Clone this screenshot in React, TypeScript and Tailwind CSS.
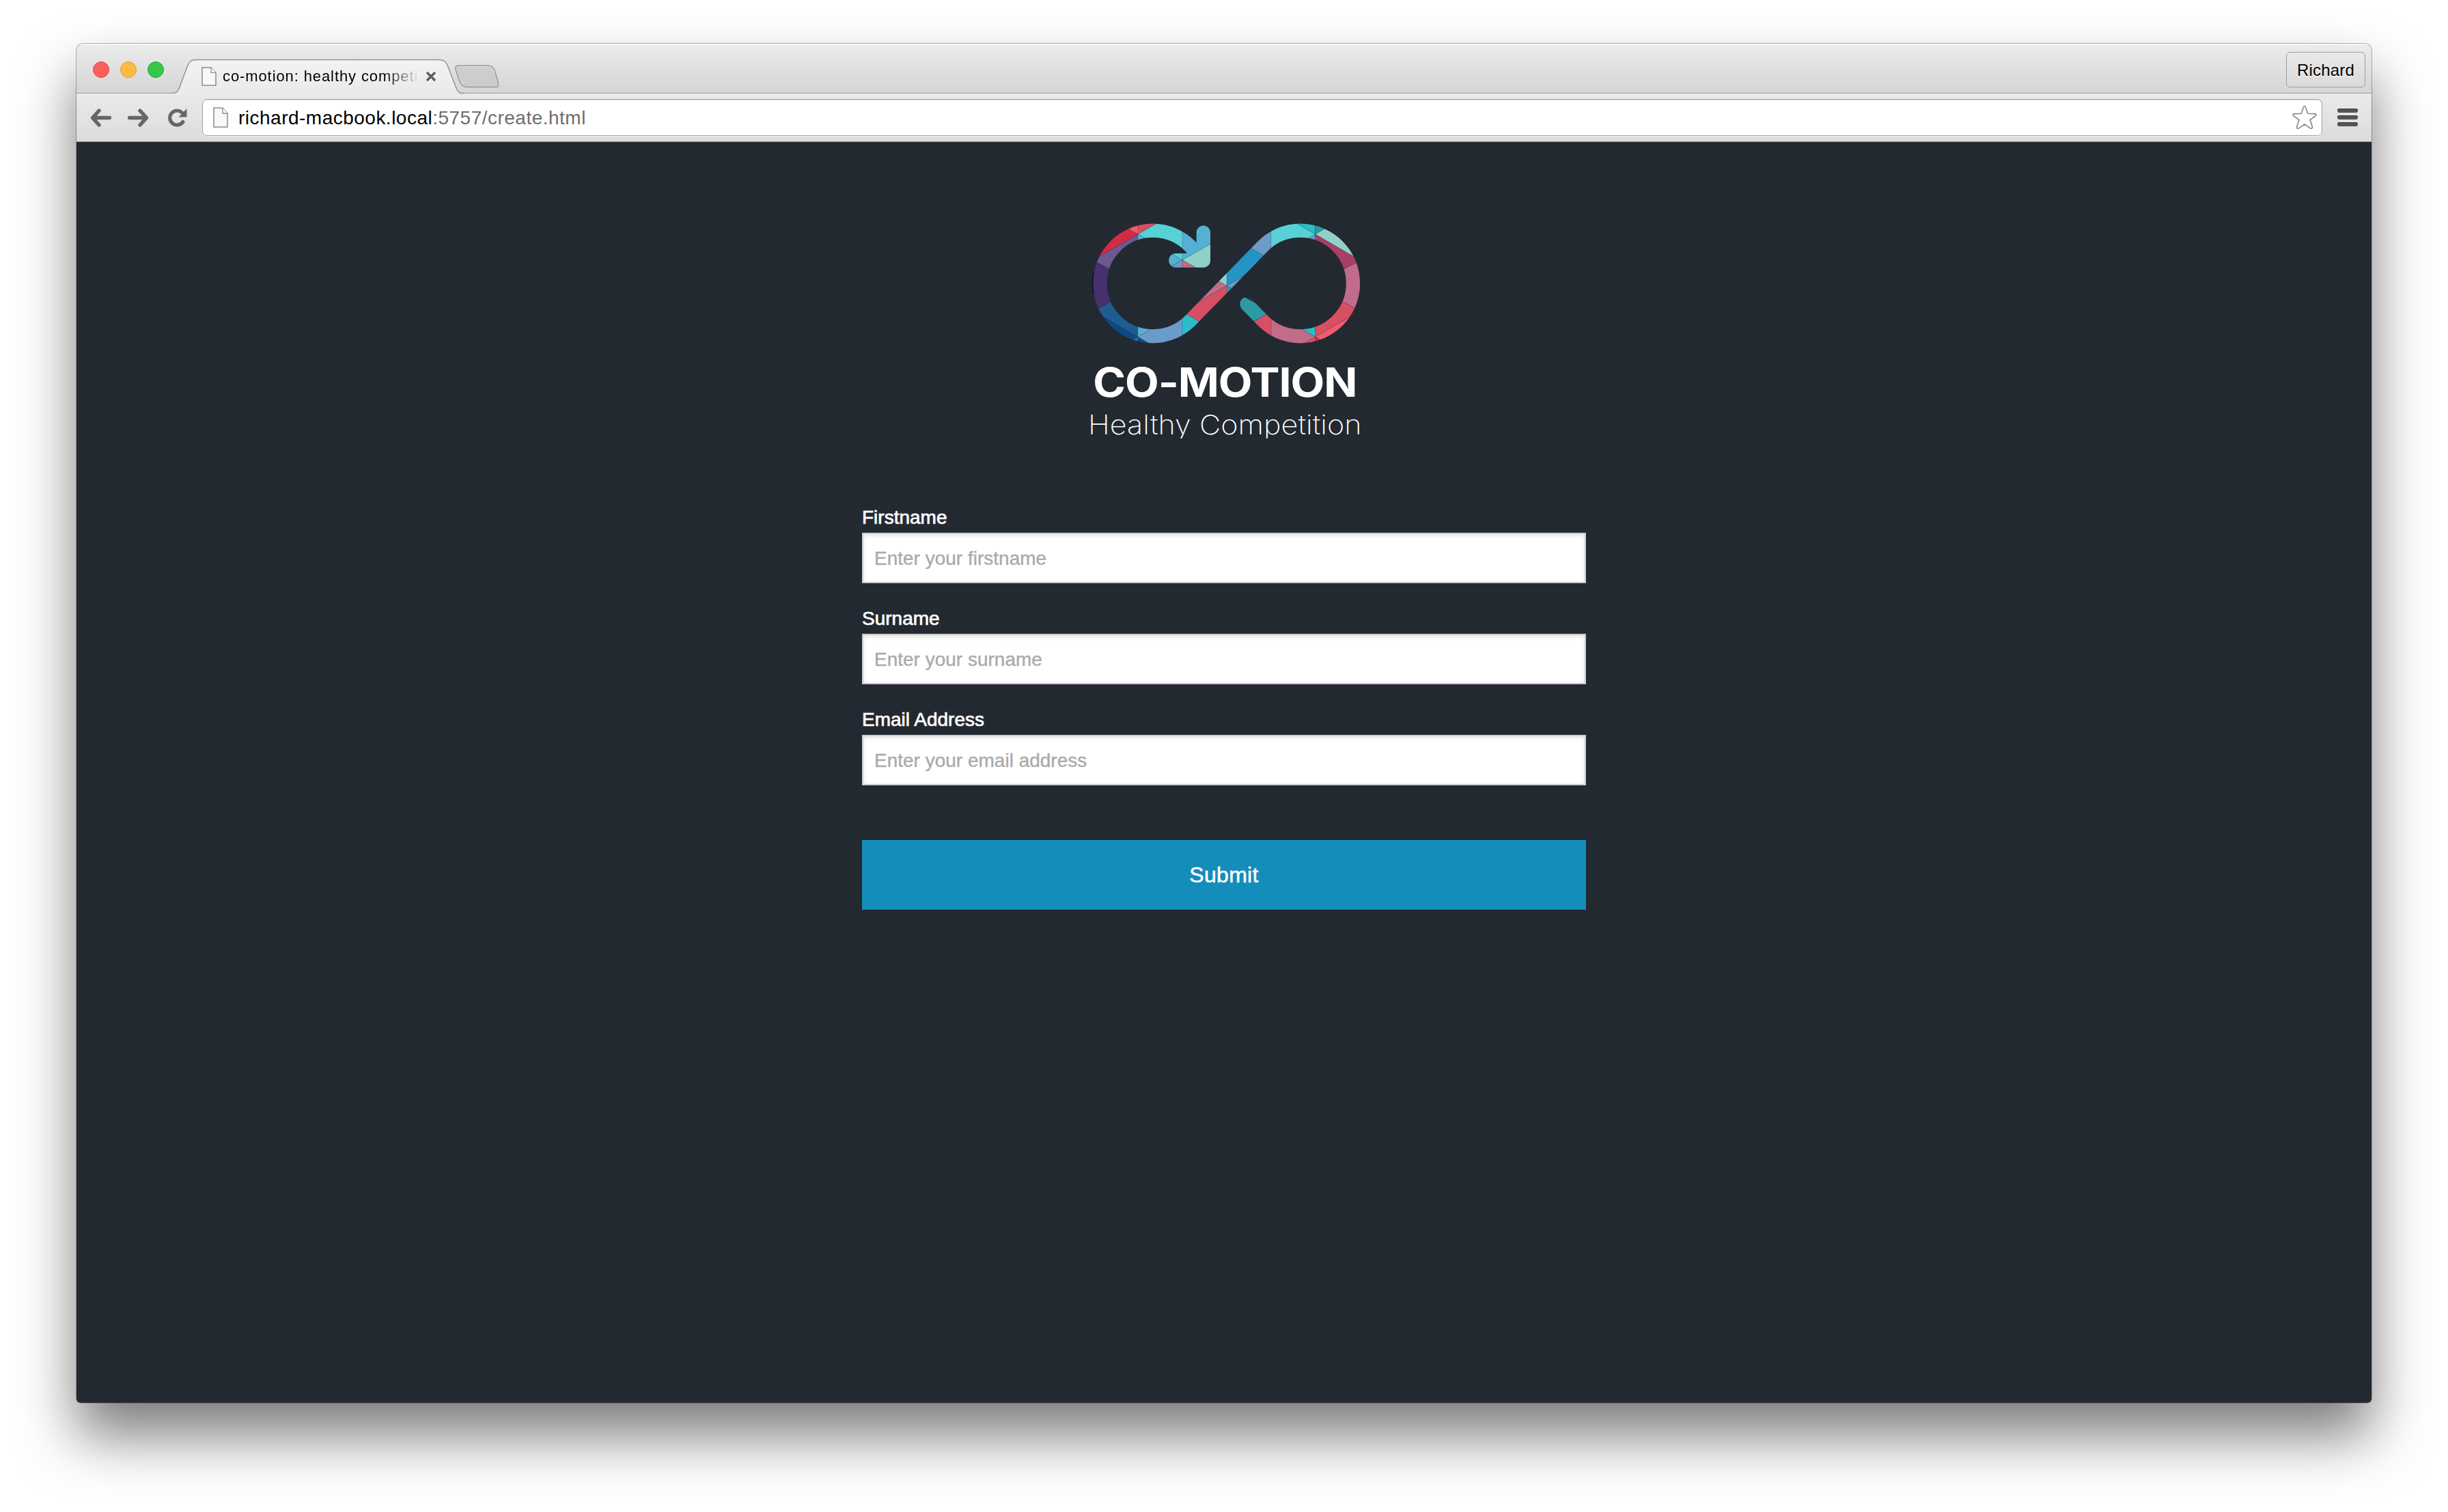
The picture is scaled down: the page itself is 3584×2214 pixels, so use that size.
import React from "react";

const LOGO_FACETS: [string, string][] = [
  // left loop
  ["#47306f", "20,188 160,266 160,383 20,464"],
  ["#6c5a8f", "70,207 258,99 258,180 160,266 70,217"],
  ["#d42b45", "70,207 258,99 190,60 150,30 40,40"],
  ["#f25a70", "258,99 190,60 190,30 258,30"],
  ["#d64f63", "258,99 258,30 378,30"],
  ["#58d1d6", "258,99 378,30 453,30 453,180 340,146"],
  ["#55b1d4", "258,99 320,134 300,160 258,160"],
  ["#205c92", "60,441 160,383 258,470 258,550 60,436"],
  ["#0d4a85", "60,436 258,550 220,572 60,580"],
  ["#2d72b5", "258,550 258,600 220,572"],
  ["#0d4a85", "258,550 258,600 345,600"],
  ["#55b1d4", "258,550 258,480 345,500"],
  ["#6b9bc8", "258,550 345,500 453,440 453,600 345,600"],
  // diagonal
  ["#2bbcc8", "453,439 453,600 545,492"],
  ["#d64f63", "450,437 545,492 648,400 648,325 450,439"],
  ["#c06c8a", "648,325 500,410 560,275"],
  ["#8fd1c8", "648,325 560,275 648,220"],
  ["#2494c5", "648,325 648,220 735,149 830,204 790,243"],
  ["#6b9bc8", "648,325 760,261 700,355"],
  ["#2b9aa2", "648,325 700,355 648,400"],
  ["#6b9bc8", "735,149 830,204 843,204 843,60"],
  // right loop
  ["#58d1d6", "843,60 920,30 1037,99 960,144 843,200"],
  ["#6b9bc8", "1037,99 1037,150 980,132"],
  ["#2bbcc8", "1037,99 920,30 1037,30"],
  ["#2b9aa2", "1037,99 1037,30 1130,45"],
  ["#8fd1c8", "1037,99 1130,45 1240,120 1240,217"],
  ["#a83f66", "1037,99 1240,217 1240,213 1140,264 1037,200"],
  ["#c06c8a", "1140,264 1240,213 1260,300 1240,439 1130,381"],
  ["#d64f63", "1130,381 1240,439 1240,432 1037,550 1037,460"],
  ["#f25a70", "1037,550 1240,432 1200,600 1100,586"],
  ["#d42b45", "1037,550 1100,586 1037,600"],
  ["#d64f63", "1037,550 1037,600 950,600"],
  ["#2bbcc8", "1037,550 1037,480 950,500"],
  ["#c06c8a", "1037,550 950,500 843,440 843,600 950,600"],
  ["#d64f63", "750,491 843,438 843,600"],
  ["#2b9aa2", "680,350 843,438 750,491 680,440"],
  ["#6b9bc8", "736,370 770,370 770,393"],
  // arrow head
  ["#55b1d4", "453,60 453,212 600,129 600,30"],
  ["#8fd1c8", "453,212 600,129 600,270 550,268"],
  ["#c06c8a", "453,212 550,268 453,270"],
  ["#58d1d6", "453,212 453,183 403,183"],
  ["#55b1d4", "453,212 395,178 380,212 395,245"],
  ["#6b9bc8", "453,212 395,245 453,260"],
];

function Logo() {
  return (
    <svg viewBox="0 0 1290 996" className="ml-[6px] h-[332px] w-[430px]" role="img" aria-label="CO-MOTION Healthy Competition">
      <defs>
        <mask id="loop" maskUnits="userSpaceOnUse" x="0" y="0" width="1290" height="630">
          <path
            d="M528 193 L487 151 A232 232 0 1 0 487 479 L807 151 A232 232 0 1 1 807 479 L736 406"
            fill="none"
            stroke="#fff"
            strokeWidth="61"
          />
          <circle cx="736" cy="405.500" r="30.500" fill="#fff" />
          <path
            d="M515 91 A30.500 30.500 0 0 1 576 91 V215 A30 30 0 0 1 546 245 H424 A31 31 0 0 1 424 183 H470 L515 138 Z"
            fill="#fff"
          />
        </mask>
      </defs>
      <path d="M63 268 Q57 315 63 360 Z" fill="#000" stroke="#000" strokeWidth="4" />
      <g mask="url(#loop)" stroke="#16303c" strokeOpacity="0.35" strokeWidth="1.5">
        {LOGO_FACETS.map(([fill, points], i) => (
          <polygon key={i} fill={fill} points={points} />
        ))}
      </g>
      <text x="61" y="812" textLength="1158" lengthAdjust="spacingAndGlyphs" className="fill-white font-['Inter'] text-[177px] font-bold tracking-[-3px]">
        CO-MOTION
      </text>
      <text x="39" y="978" textLength="1202" lengthAdjust="spacingAndGlyphs" className="fill-white font-['Inter'] text-[117px] font-extralight">
        Healthy Competition
      </text>
    </svg>
  );
}

function PageIcon({ className }: { className: string }) {
  return (
    <svg viewBox="0 0 22 30" preserveAspectRatio="none" className={className}>
      <path d="M1 1 H14 L21 9 V29 H1 Z" fill="#f8f8f8" stroke="#8a8a8a" strokeWidth="1.500" />
      <path d="M14 1 V9 H21" fill="#fff" stroke="#8a8a8a" strokeWidth="1.300" />
    </svg>
  );
}

function Arrow({ className }: { className: string }) {
  return (
    <svg viewBox="0 0 31 27" className={className}>
      <path d="M13 3 L3.500 13.500 L13 24 M4 13.500 H28.500" fill="none" stroke="#666" strokeWidth="5.400" strokeLinecap="round" strokeLinejoin="round" />
    </svg>
  );
}

function TabStrip() {
  return (
    <div className="flex h-[72px] items-end bg-linear-to-b from-[#ececec] to-[#d5d5d5] pr-[9px] pl-6 shadow-[inset_0_2px_0_#f6f6f6]">
      <div className="mb-[22px] flex gap-4">
        <span className="size-6 rounded-full border border-[#e2463f] bg-[#fc605c]" />
        <span className="size-6 rounded-full border border-[#de9f34] bg-[#fdbc40]" />
        <span className="size-6 rounded-full border border-[#1dab2f] bg-[#34c84a]" />
      </div>
      <div className="relative ml-3 h-[50px] w-[428px]">
        <svg viewBox="0 0 428 52" className="absolute top-0 left-0 z-10 h-[52px] w-[428px]">
          <defs>
            <linearGradient id="tab" x1="0" y1="0" x2="0" y2="1">
              <stop offset="0" stopColor="#f3f3f3" />
              <stop offset="1" stopColor="#eaeaea" />
            </linearGradient>
          </defs>
          <path d="M0 52 V50.500 C6 50.500 8 49 10 44 L22 12 C25 4 28 1.500 36 1.500 H390 C398 1.500 401 4 404 12 L416 43 C418 48 420 50.500 424 50.500 H428 V52 Z" fill="url(#tab)" />
          <path d="M-4 50.500 C6 50.500 8 49 10 44 L22 12 C25 4 28 1.500 36 1.500 H390 C398 1.500 401 4 404 12 L416 43 C418 48 420 50.500 424 50.500 H428" fill="none" stroke="#949494" strokeWidth="1.500" />
        </svg>
        <div className="relative z-20 flex h-full items-center pt-0.5 pl-[43px]">
          <PageIcon className="h-7 w-[22px]" />
          <span className="ml-[9px] w-[288px] overflow-hidden mask-r-from-82% mask-r-to-100% text-[22px] leading-7 tracking-[0.9px] whitespace-nowrap text-black">
            co-motion: healthy competition
          </span>
          <svg viewBox="0 0 16 16" className="ml-[9px] size-4">
            <path d="M2 2 L14 14 M14 2 L2 14" stroke="#5c5c5c" strokeWidth="3.200" />
          </svg>
        </div>
      </div>
      <svg viewBox="0 0 70 36" className="-ml-4 mb-[6px] h-9 w-[70px]">
        <path d="M8 2 H48 C56 2 58 4 61 11 L65.500 28 C66 32 65 33.500 62 33.500 H20 C13 33.500 11 30 8 23 L3 8 C2 4 3 2 8 2 Z" fill="#cdcdcd" stroke="#999" strokeWidth="1.400" />
        <path d="M8 3.500 H48 C55 3.500 57 6 60 12" fill="none" stroke="#e6e6e6" strokeWidth="1" />
      </svg>
      <button className="mb-2 ml-auto h-[52px] w-[116px] rounded-[6px] border border-[#9e9e9e] bg-linear-to-b from-[#e9e9e9] to-[#dadada] pt-0.5 text-[24px] tracking-[0.2px] text-black [text-shadow:0_2px_0_#f4f4f4]">
        Richard
      </button>
    </div>
  );
}

function Toolbar() {
  return (
    <div className="flex h-[72px] items-center border-t border-b border-t-[#949494] border-b-[#8f8f8f] bg-linear-to-b from-[#eaeaea] to-[#dcdcdc] pl-5 shadow-[inset_0_1px_0_#f2f2f2]">
      <Arrow className="h-[27px] w-[31px]" />
      <Arrow className="ml-6 h-[27px] w-[31px] rotate-180" />
      <svg viewBox="0 0 28 27" className="ml-7 h-[27px] w-7">
        <path d="M21.800 19.500 A10.500 10.500 0 1 1 20 5.500" fill="none" stroke="#666" strokeWidth="5.200" strokeLinecap="round" />
        <path d="M27.500 0 V12.500 H15.500 Z" fill="#666" />
      </svg>
      <div className="ml-[22px] flex h-[54px] w-[3104px] items-center rounded-[7px] border border-[#a0a0a0] bg-white pr-[7px] pl-[15px] shadow-[inset_0_1px_1px_#ddd,0_1px_0_#f3f3f3]">
        <PageIcon className="h-[30px] w-[22px]" />
        <span className="ml-[15px] pt-0.5 text-[28px] tracking-[0.49px] whitespace-nowrap text-black">
          richard-macbook.local<span className="text-[#6e6e6e]">:5757/create.html</span>
        </span>
        <svg viewBox="0 0 36 36" className="ml-auto size-9">
          <path
            d="M16.300 3.200 Q18 -0.200 19.700 3.200 L22.700 12.200 L32.700 12.600 Q36.500 13.300 34 15.600 L26 21.600 L29.300 31.300 Q29.800 35.300 26.500 33.800 L18 28 L9.500 33.800 Q6.200 35.300 6.700 31.300 L10 21.600 L2 15.600 Q-0.500 13.300 3.300 12.600 L13.300 12.200 Z"
            fill="#fff"
            stroke="#868686"
            strokeWidth="1.600"
          />
        </svg>
      </div>
      <div className="ml-[22px] flex w-[30px] flex-col gap-1">
        <span className="h-1.5 rounded-full bg-[#555] shadow-[inset_0_1px_0_#333]" />
        <span className="h-1.5 rounded-full bg-[#555] shadow-[inset_0_1px_0_#333]" />
        <span className="h-1.5 rounded-full bg-[#555] shadow-[inset_0_1px_0_#333]" />
      </div>
    </div>
  );
}

function Field({ label, placeholder }: { label: string; placeholder: string }) {
  return (
    <label className="block">
      <span className="block text-[28px] leading-10 text-white [-webkit-text-stroke:0.7px_white]">{label}</span>
      <input
        placeholder={placeholder}
        className="mt-0.5 block h-[74px] w-full border-2 border-[#ccc] bg-white px-4 pt-0.5 text-[28px] shadow-[inset_0_2px_6px_rgba(0,0,0,0.12)] placeholder:text-[#aaa] placeholder:[-webkit-text-stroke:0.4px_#aaa]"
      />
    </label>
  );
}

export default function App() {
  return (
    <div className="h-[2214px] w-[3584px] overflow-hidden bg-white px-28 pt-16 font-['Liberation_Sans',Arial,sans-serif]">
      <div className="h-[1990px] w-[3360px] rounded-t-[10px] rounded-b-[6px] shadow-[0_0_0_1px_rgba(0,0,0,0.28),0_48px_84px_rgba(0,0,0,0.52)]">
        <div className="flex h-full flex-col overflow-hidden rounded-t-[10px] rounded-b-[6px]">
          <TabStrip />
          <Toolbar />
          <main className="flex flex-1 flex-col items-center bg-[#232931] pt-[102px]">
            <Logo />
            <form className="mt-24 w-[1060px]">
              <div className="flex flex-col gap-8">
                <Field label="Firstname" placeholder="Enter your firstname" />
                <Field label="Surname" placeholder="Enter your surname" />
                <Field label="Email Address" placeholder="Enter your email address" />
              </div>
              <button type="button" className="mt-20 h-[102px] w-full bg-[#158dba] text-[32px] tracking-[0.3px] text-white [-webkit-text-stroke:0.5px_white]">
                Submit
              </button>
            </form>
          </main>
        </div>
      </div>
    </div>
  );
}
